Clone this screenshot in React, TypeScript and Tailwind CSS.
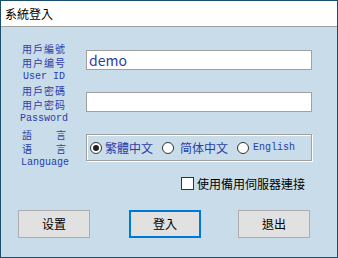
export default function App() {
  const cjk = "font-['Noto_Sans_CJK_TC','Noto_Sans_CJK_SC',sans-serif]";
  const mono = "font-['Liberation_Mono',monospace]";

  return (
    <div className={`flex h-[258px] w-[338px] flex-col border border-[#1b4d6d] bg-[#c8dcea] ${cjk}`}>
      {/* title bar */}
      <div className="flex h-[26px] items-center border-b border-[#a0a0a0] bg-white pl-[4px] text-[12px] text-black">
        系統登入
      </div>

      <div className="flex flex-col">
        {/* user id */}
        <div className="ml-[20px] mt-[15px] flex items-start">
          <div className="flex w-[46px] flex-col items-center text-[10px] leading-[14px] tracking-[1px] text-[#2b3da8]">
            <div>用戶編號</div>
            <div>用户编号</div>
            <div className={`${mono} tracking-normal`}>User ID</div>
          </div>
          <div className="ml-[19px] mt-[8px] flex h-[20px] w-[226px] items-center border border-[#a0a0a0] bg-white pl-[2px] text-[14px] text-[#2b3da8]">
            demo
          </div>
        </div>

        {/* password */}
        <div className="ml-[20px] flex items-start">
          <div className="flex w-[46px] flex-col items-center text-[10px] leading-[14px] tracking-[1px] text-[#2b3da8]">
            <div>用戶密碼</div>
            <div>用户密码</div>
            <div className={`${mono} tracking-normal`}>Password</div>
          </div>
          <div className="ml-[19px] mt-[8px] h-[20px] w-[226px] border border-[#a0a0a0] bg-white" />
        </div>

        {/* language */}
        <div className="ml-[20px] mt-[2px] flex items-start">
          <div className="flex w-[46px] flex-col text-[10px] leading-[14px] text-[#2b3da8]">
            <div className="flex justify-between px-[1px]">
              <div>語</div>
              <div>言</div>
            </div>
            <div className="flex justify-between px-[1px]">
              <div>语</div>
              <div>言</div>
            </div>
            <div className={`${mono} text-center`}>Language</div>
          </div>
          <div className="ml-[19px] mt-[6px] flex h-[27px] w-[226px] items-center border border-[#a0a0a0] pl-[3px] text-[12px] text-[#2b3da8] shadow-[inset_1px_1px_0_#fff,1px_1px_0_#fff]">
            <div className="flex w-[72px] items-center gap-[3px]">
              <span className="flex h-[12px] w-[12px] items-center justify-center rounded-full border border-[#333] bg-white">
                <span className="h-[6px] w-[6px] rounded-full bg-[#222]" />
              </span>
              <span>繁體中文</span>
            </div>
            <div className="flex w-[75px] items-center gap-[6px]">
              <span className="h-[12px] w-[12px] rounded-full border border-[#333] bg-white" />
              <span>简体中文</span>
            </div>
            <div className="flex items-center gap-[4px]">
              <span className="h-[12px] w-[12px] rounded-full border border-[#333] bg-white" />
              <span className={`${mono} text-[10px]`}>English</span>
            </div>
          </div>
        </div>

        {/* backup server */}
        <div className="ml-[180px] mt-[7px] flex h-[13px] items-center gap-[3px] text-[12px] text-black">
          <span className="h-[13px] w-[13px] border border-[#333] bg-white" />
          <span>使用備用伺服器連接</span>
        </div>

        {/* buttons */}
        <div className="ml-[17px] mt-[20px] flex text-[12px] text-black">
          <button className="flex h-[28px] w-[72px] items-center justify-center border border-[#adadad] bg-[#e1e1e1]">
            设置
          </button>
          <button className="ml-[39px] flex h-[28px] w-[72px] items-center justify-center border-2 border-[#0078d7] bg-[#e1e1e1]">
            登入
          </button>
          <button className="ml-[37px] flex h-[28px] w-[72px] items-center justify-center border border-[#adadad] bg-[#e1e1e1]">
            退出
          </button>
        </div>
      </div>
    </div>
  );
}
